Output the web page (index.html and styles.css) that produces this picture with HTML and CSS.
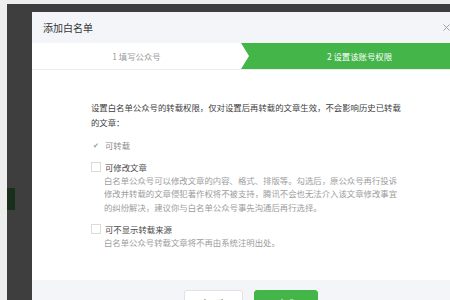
FILE: index.html
```html
<!DOCTYPE html>
<html>
<head>
    <meta charset="utf-8">
    <title>添加白名单</title>
    <link rel="stylesheet" href="styles.css">
</head>
<body>
    <div class="page">
        <div class="side">
            <div class="side-mark"></div>
        </div>

        <div class="dialog">
            <div class="dialog-head">
                <span class="dialog-title">添加白名单</span>
                <svg class="close" width="7" height="7" viewBox="0 0 7 7">
                    <path d="M0.5 0.5 L6.5 6.5 M6.5 0.5 L0.5 6.5" stroke="#a0a0a0" stroke-width="1" fill="none"/>
                </svg>
            </div>

            <div class="steps">
                <div class="step step-done">1 填写公众号</div>
                <div class="step step-current">2 设置该账号权限</div>
            </div>

            <div class="dialog-body">
                <p class="intro">设置白名单公众号的转载权限，仅对设置后再转载的文章生效，不会影响历史已转载的文章：</p>

                <div class="option">
                    <label class="option-label label-disabled">
                        <span class="box box-checked">✔</span>可转载
                    </label>
                </div>

                <div class="option">
                    <label class="option-label">
                        <span class="box"></span>可修改文章
                    </label>
                    <p class="option-desc">白名单公众号可以修改文章的内容、格式、排版等。勾选后，原公众号再行投诉修改并转载的文章侵犯著作权将不被支持，腾讯不会也无法介入该文章修改事宜的纠纷解决，建议你与白名单公众号事先沟通后再行选择。</p>
                </div>

                <div class="option">
                    <label class="option-label">
                        <span class="box"></span>可不显示转载来源
                    </label>
                    <p class="option-desc">白名单公众号转载文章将不再由系统注明出处。</p>
                </div>
            </div>

            <div class="dialog-foot">
                <button class="btn btn-default">上一步</button>
                <button class="btn btn-primary">完成</button>
            </div>
        </div>
    </div>
</body>
</html>
```

FILE: styles.css
```css
html, body {
    margin: 0;
    width: 450px;
    height: 300px;
    overflow: hidden;
    background-color: #eeeeee;
    font-family: "Noto Sans CJK SC", "Noto Sans", sans-serif;
}

.page {
    display: flex;
    margin: 4px 0 0 7px;
    padding-top: 8px;
    height: 288px;
    background-color: #3e3e3e;
}

.side {
    width: 25px;
    flex-shrink: 0;
}

.side-mark {
    width: 8px;
    height: 22px;
    margin-top: 176px;
    background-color: #1a2f1b;
}

.dialog {
    width: 438px;
    flex-shrink: 0;
    background-color: #ffffff;
}

.dialog-head {
    display: flex;
    align-items: center;
    justify-content: space-between;
    height: 31px;
    padding: 0 20px 0 11px;
    background-color: #f4f5f9;
}

.dialog-title {
    font-size: 10px;
    color: #353535;
}

.steps {
    display: flex;
    height: 26px;
    border-bottom: 1px solid #ececf0;
}

.step {
    display: flex;
    align-items: center;
    justify-content: center;
    font-size: 8.4px;
}

.step-done {
    width: 209px;
    color: #9a9a9a;
}

.step-current {
    flex: 1;
    padding-left: 8px;
    color: #ffffff;
    background-color: #44b549;
    clip-path: polygon(0 0, 100% 0, 100% 100%, 0 100%, 8px 50%);
}

.dialog-body {
    padding: 30px 64px 31px 59px;
}

.intro {
    margin: 0;
    font-size: 8.4px;
    line-height: 15px;
    color: #3e3e3e;
}

.option {
    margin-top: 8px;
}

.option-label {
    display: flex;
    align-items: center;
    font-size: 8.4px;
    line-height: 14px;
    color: #4a4a4a;
}

.label-disabled {
    color: #8c8c8c;
}

.box {
    display: flex;
    align-items: center;
    justify-content: center;
    width: 8px;
    height: 8px;
    margin-right: 4px;
    border: 1px solid #dcdcdc;
    font-size: 7px;
    color: #9a9a9a;
}

.box-checked {
    border-color: transparent;
}

.option-desc {
    width: 296px;
    margin: 0 0 0 13px;
    font-size: 8.4px;
    line-height: 13.3px;
    color: #9d9d9d;
}

.dialog-foot {
    display: flex;
    justify-content: center;
    gap: 11px;
    padding: 10px 0;
    background-color: #f4f5f9;
}

.btn {
    height: 24px;
    padding: 0;
    border-radius: 3px;
    font-family: inherit;
    font-size: 8.4px;
}

.btn-default {
    width: 59px;
    border: 1px solid #e2e2e6;
    background-color: #ffffff;
    color: #353535;
}

.btn-primary {
    width: 64px;
    border: 1px solid #44b549;
    background-color: #44b549;
    color: #ffffff;
}
```
